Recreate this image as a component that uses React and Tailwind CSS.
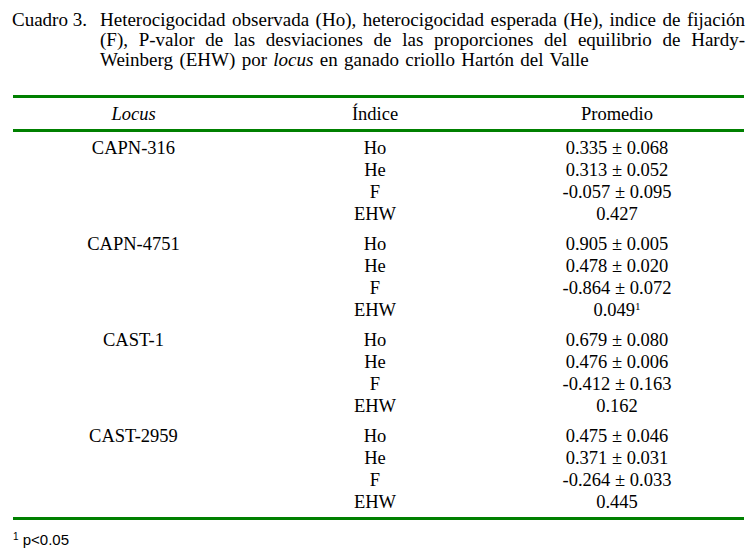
import React from "react";

const groups = [
  {
    locus: "CAPN-316",
    rows: [
      ["Ho", "0.335 ± 0.068"],
      ["He", "0.313 ± 0.052"],
      ["F", "-0.057 ± 0.095"],
      ["EHW", "0.427"],
    ],
  },
  {
    locus: "CAPN-4751",
    rows: [
      ["Ho", "0.905 ± 0.005"],
      ["He", "0.478 ± 0.020"],
      ["F", "-0.864 ± 0.072"],
      ["EHW", "0.049", "1"],
    ],
  },
  {
    locus: "CAST-1",
    rows: [
      ["Ho", "0.679 ± 0.080"],
      ["He", "0.476 ± 0.006"],
      ["F", "-0.412 ± 0.163"],
      ["EHW", "0.162"],
    ],
  },
  {
    locus: "CAST-2959",
    rows: [
      ["Ho", "0.475 ± 0.046"],
      ["He", "0.371 ± 0.031"],
      ["F", "-0.264 ± 0.033"],
      ["EHW", "0.445"],
    ],
  },
];

const App = () => {
  return (
    <div className="w-[752px] h-[559px] bg-white text-black overflow-hidden font-['Liberation_Serif',serif]">
      {/* Caption */}
      <div className="flex pl-[12px] pr-[7px] pt-[10px] text-[19px] leading-[20px]">
        <div className="w-[88px] shrink-0">Cuadro 3.</div>
        <div className="flex-1">
          <div className="text-justify [text-align-last:justify]">
            Heterocigocidad observada (Ho), heterocigocidad esperada (He), indice de fijación
          </div>
          <div className="text-justify [text-align-last:justify]">
            (F), P-valor de las desviaciones de las proporciones del equilibrio de Hardy-
          </div>
          <div className="[word-spacing:1.6px]">
            Weinberg (EHW) por <i>locus</i> en ganado criollo Hartón del Valle
          </div>
        </div>
      </div>

      {/* Table */}
      <div className="ml-[13px] mt-[25px] w-[731px]">
        <div className="border-t-[3px] border-b-[3px] border-[#008000] grid grid-cols-[241px_242px_242px] h-[37px] items-center pt-[2px] text-[18.5px]">
          <div className="text-center italic">Locus</div>
          <div className="text-center">Índice</div>
          <div className="text-center">Promedio</div>
        </div>
        <div className="flex flex-col gap-[8px] pt-[5px] pb-[4px] border-b-[3px] border-[#008000] text-[18.5px]">
          {groups.map((g, gi) => (
            <div key={gi}>
              {g.rows.map((r, ri) => (
                <div key={ri} className="grid grid-cols-[241px_242px_242px] h-[22px] items-center leading-[22px]">
                  <div className="text-center">{ri === 0 ? g.locus : ""}</div>
                  <div className="text-center">{r[0]}</div>
                  <div className="text-center">
                    {r[1]}
                    <span className="text-[11px] align-[6px] leading-none">{r[2]}</span>
                  </div>
                </div>
              ))}
            </div>
          ))}
        </div>
      </div>

      {/* Footnote */}
      <div className="pl-[13px] mt-[7px] font-['Liberation_Sans',sans-serif] text-[15px] leading-[20px]">
        <span className="text-[10px] align-[5px]">1</span> p&lt;0.05
      </div>
    </div>
  );
};

export default App;
